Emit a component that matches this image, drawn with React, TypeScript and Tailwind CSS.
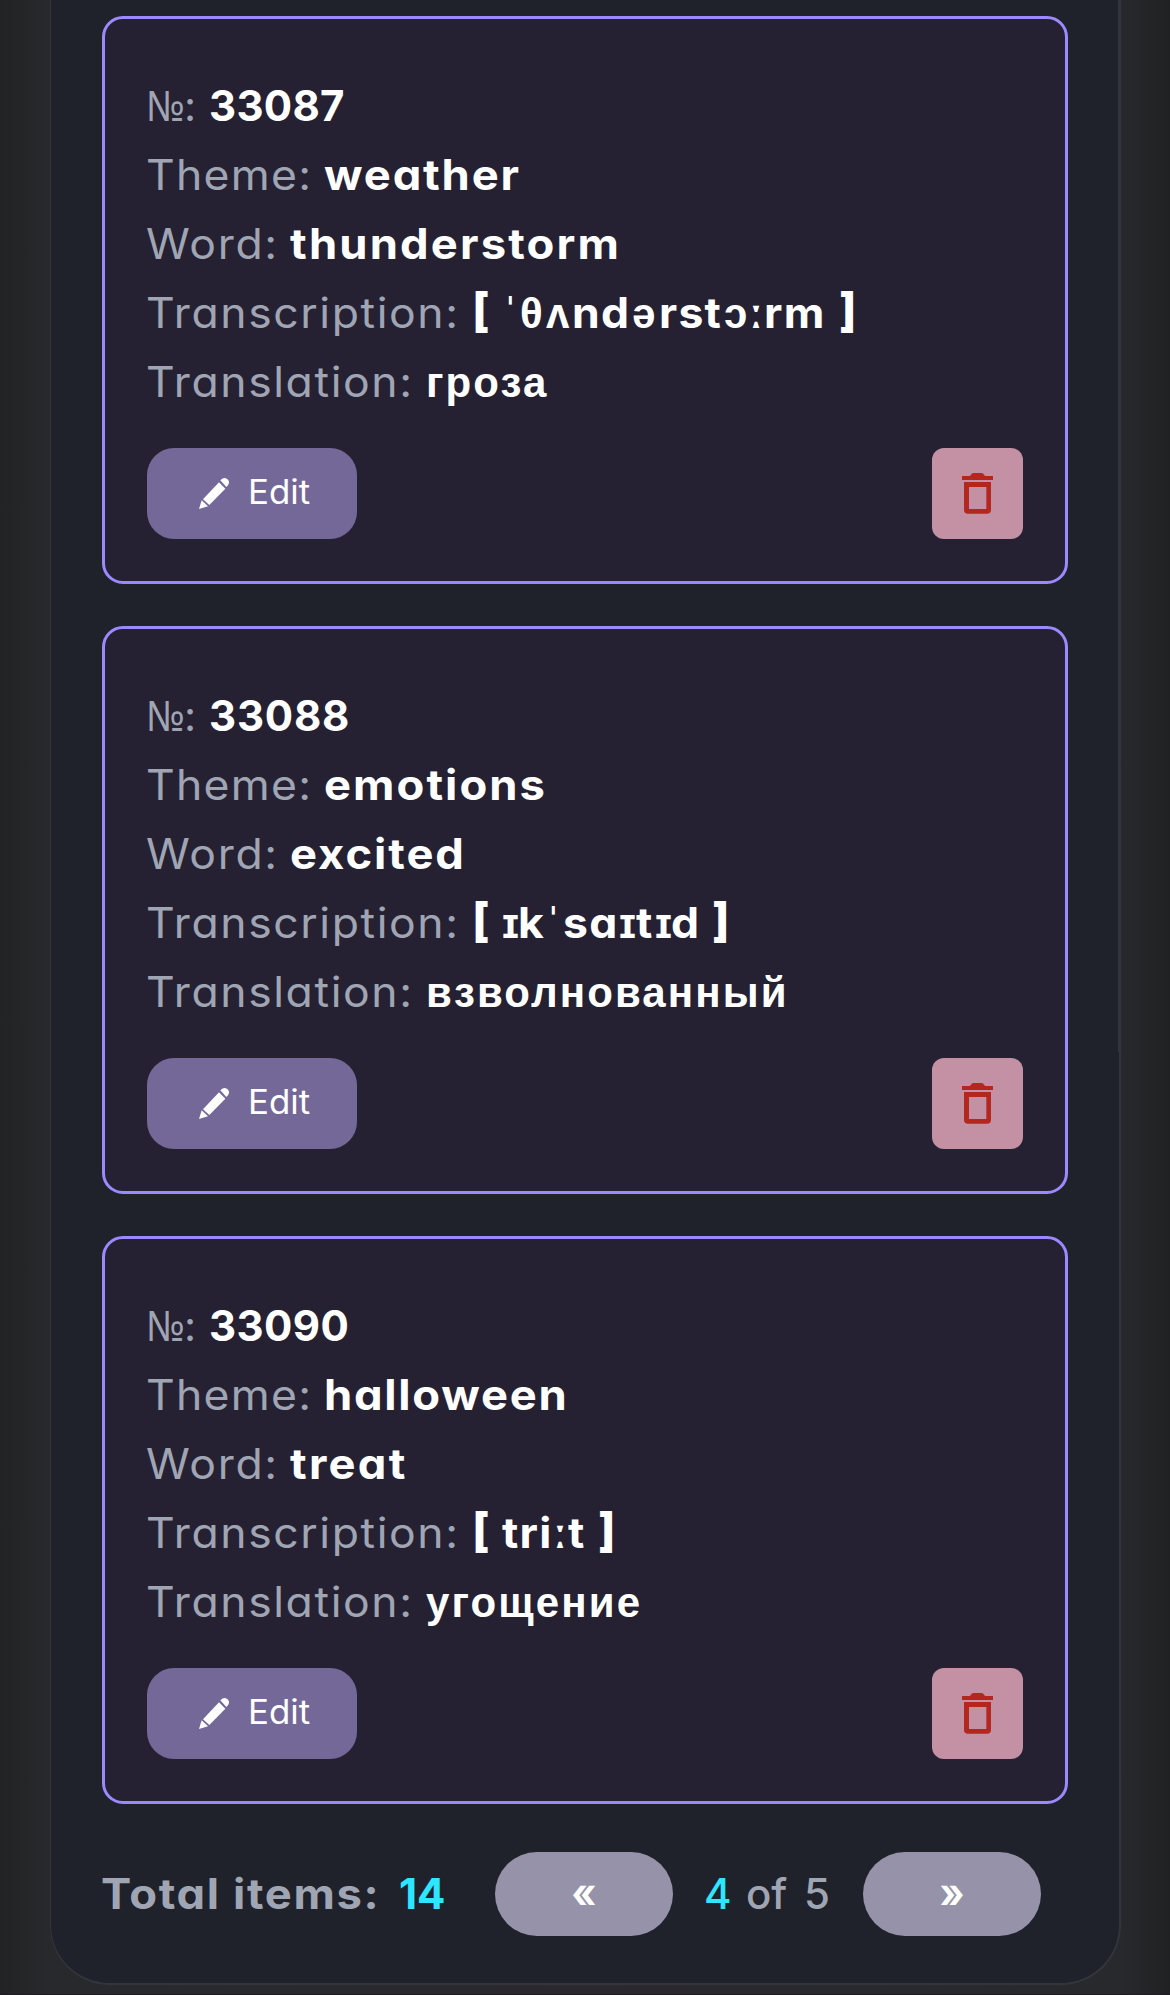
import React from "react";

type Segment = { text: string; width: string; kind: "latin" | "ipa" | "mark" | "bracket" };
type Entry = {
  id: string;
  idSpacing: string;
  theme: string;
  themeSpacing: string;
  word: string;
  wordSpacing: string;
  transcription: Segment[];
  translation: string;
};

const entries: Entry[] = [
  {
    id: "33087",
    idSpacing: "tracking-[0.3px]",
    theme: "weather",
    themeSpacing: "tracking-[1.7px]",
    word: "thunderstorm",
    wordSpacing: "tracking-[2px]",
    transcription: [
      { text: "[", width: "w-[35px]", kind: "bracket" },
      { text: "ˈ", width: "w-[13px]", kind: "mark" },
      { text: "θ", width: "w-[26px]", kind: "ipa" },
      { text: "ʌ", width: "w-[26px]", kind: "ipa" },
      { text: "nd", width: "w-[60px]", kind: "latin" },
      { text: "ə", width: "w-[27px]", kind: "ipa" },
      { text: "rst", width: "w-[65px]", kind: "latin" },
      { text: "ɔ", width: "w-[25px]", kind: "ipa" },
      { text: "ː", width: "w-[15px]", kind: "ipa" },
      { text: "rm", width: "w-[75px]", kind: "latin" },
      { text: "]", width: "w-[20px]", kind: "bracket" },
    ],
    translation: "гроза",
  },
  {
    id: "33088",
    idSpacing: "tracking-[0.8px]",
    theme: "emotions",
    themeSpacing: "tracking-[1.9px]",
    word: "excited",
    wordSpacing: "tracking-[1.8px]",
    transcription: [
      { text: "[", width: "w-[30px]", kind: "bracket" },
      { text: "ɪ", width: "w-[16px]", kind: "ipa" },
      { text: "k", width: "w-[32px]", kind: "latin" },
      { text: "ˈ", width: "w-[13px]", kind: "mark" },
      { text: "sa", width: "w-[56px]", kind: "latin" },
      { text: "ɪ", width: "w-[17px]", kind: "ipa" },
      { text: "t", width: "w-[19px]", kind: "latin" },
      { text: "ɪ", width: "w-[16px]", kind: "ipa" },
      { text: "d", width: "w-[41px]", kind: "latin" },
      { text: "]", width: "w-[20px]", kind: "bracket" },
    ],
    translation: "взволнованный",
  },
  {
    id: "33090",
    idSpacing: "tracking-[0.4px]",
    theme: "halloween",
    themeSpacing: "tracking-[1.6px]",
    word: "treat",
    wordSpacing: "tracking-[2.1px]",
    transcription: [
      { text: "[", width: "w-[30px]", kind: "bracket" },
      { text: "tri", width: "w-[51px]", kind: "latin" },
      { text: "ː", width: "w-[15px]", kind: "ipa" },
      { text: "t", width: "w-[30px]", kind: "latin" },
      { text: "]", width: "w-[20px]", kind: "bracket" },
    ],
    translation: "угощение",
  },
];

const label = "inline-block origin-left -ml-[1.5px] scale-x-[1.06] font-normal text-[#a0a5b4]";
const value = "inline-block origin-left font-[740] text-white";

const segmentClass = {
  latin: "inline-block origin-left scale-x-[1.06] tracking-[1.2px]",
  ipa: "inline-block font-['Liberation_Sans',sans-serif]",
  mark: "inline-block font-medium origin-left scale-x-[0.85]",
  bracket: "inline-block origin-left scale-x-[1.1] scale-y-[1.12] relative -top-[3px] font-extrabold",
};

function PencilIcon() {
  return (
    <svg width="30" height="31" viewBox="297 174 90 93" fill="currentColor" className="shrink-0">
      <path d="M361 181 Q368 174 374 174 A13.500 13.500 0 0 1 387 188 Q386 195 379 201 Z" />
      <path d="M309 238 L357 187 L376 206 L328 255 Z" />
      <path d="M305 241 L324 259 L297 267 Z" />
    </svg>
  );
}

function TrashIcon() {
  return (
    <svg width="31" height="41" viewBox="186 129 93 123" fill="currentColor">
      <path d="M186 138 H207 Q211 138 213 134 Q215 129 220 129 H245 Q250 129 252 134 Q254 138 258 138 H279 V150 H186 Z" />
      <path fillRule="evenodd" d="M192 156 H273 V239 Q273 251 261 251 H204 Q192 251 192 239 Z M207 171 V237 H259 V171 Z" />
    </svg>
  );
}

function WordCard({ entry }: { entry: Entry }) {
  return (
    <article className="h-[568px] rounded-[21px] border-[3px] border-[#9b8aff] bg-[#252132] px-[42px] pt-[52px]">
      <div className="text-[42px] leading-[69px]">
        <div className="flex h-[69px]">
          <div className="flex w-[62px] text-[#a0a5b4]">
            <span className="relative -top-px -ml-px inline-block w-[38px] origin-left scale-x-[0.9] font-['Noto_Sans',sans-serif] font-normal">№</span>
            <span>:</span>
          </div>
          <span className={`${value} ${entry.idSpacing}`}>{entry.id}</span>
        </div>
        <div className="flex h-[69px]">
          <div className="w-[177px]"><span className={`${label} tracking-[1.2px]`}>Theme:</span></div>
          <span className={`${value} scale-x-[1.08] ${entry.themeSpacing}`}>{entry.theme}</span>
        </div>
        <div className="flex h-[69px]">
          <div className="w-[143px]"><span className={`${label} tracking-[1.6px]`}>Word:</span></div>
          <span className={`${value} scale-x-[1.08] ${entry.wordSpacing}`}>{entry.word}</span>
        </div>
        <div className="flex h-[69px]">
          <div className="w-[325px]"><span className={`${label} tracking-[1.5px]`}>Transcription:</span></div>
          <div className="flex font-bold text-white">
            {entry.transcription.map((s, i) => (
              <span key={i} className={s.width}>
                <span className={segmentClass[s.kind]}>{s.text}</span>
              </span>
            ))}
          </div>
        </div>
        <div className="flex h-[69px]">
          <div className="w-[279px]"><span className={`${label} tracking-[1.5px]`}>Translation:</span></div>
          <span className="relative top-px font-['Liberation_Sans',sans-serif] font-bold tracking-[2.1px] text-white">{entry.translation}</span>
        </div>
      </div>
      <div className="mt-8 flex justify-between">
        <button className="flex h-[91px] w-[210px] items-center rounded-[27px] bg-[#746899] pl-[52px] text-white">
          <PencilIcon />
          <span className="relative -top-px ml-[19px] origin-left scale-x-[1.04] text-[33.5px] font-normal">Edit</span>
        </button>
        <button className="flex size-[91px] items-center justify-center rounded-[12px] bg-[#c491a4] text-[#b5261e]">
          <TrashIcon />
        </button>
      </div>
    </article>
  );
}

function PageButton({ children }: { children: React.ReactNode }) {
  return (
    <button className="flex h-[84px] w-[178px] items-center justify-center rounded-full bg-[#9592a9] pb-[3px] text-[42px] font-bold text-white">
      <span className="scale-x-[0.9]">{children}</span>
    </button>
  );
}

export default function App() {
  return (
    <div className="h-[1995px] w-[1170px] overflow-hidden border-b border-[#211a20] bg-[linear-gradient(90deg,#222325_0px,#28292c_50px,#2a2a2e_585px,#28292c_1121px,#202123_1170px)] pl-[50px] font-['Inter',sans-serif] [font-feature-settings:'cv11']">
      <main className="relative h-[1985px] w-[1071px] rounded-b-[60px] border-r-2 border-b-2 border-l border-[#33343c] bg-[#1f222b] px-[51px] pt-4">
        <div className="absolute top-0 -right-0.5 h-[1052px] w-[3px] bg-[#30343f]" />
        <div className="flex w-[966px] flex-col gap-[42px]">
          {entries.map((e) => (
            <WordCard key={e.id} entry={e} />
          ))}
        </div>
        <footer className="mt-12 flex h-[84px] items-center text-[42px] leading-[84px] text-[#a0a5b4]">
          <div className="w-[297px] font-bold whitespace-nowrap">
            <span className="-ml-px inline-block origin-left scale-x-[1.08] tracking-[1.5px]">Total items:</span>
          </div>
          <div className="w-[96px] font-bold text-[#2ee6ff]">14</div>
          <PageButton>«</PageButton>
          <div className="flex w-[190px] pl-[31px] font-medium">
            <span className="w-[42px] text-[#2ee6ff]">4</span>
            <span className="w-[58px]">of</span>
            <span>5</span>
          </div>
          <PageButton>»</PageButton>
        </footer>
      </main>
    </div>
  );
}
